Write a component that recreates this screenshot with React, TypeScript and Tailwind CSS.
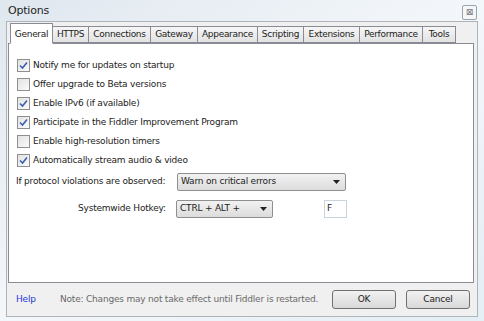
import React from 'react';

const tabs = [
  { t: 'General', w: 'w-[43px]' },
  { t: 'HTTPS', w: 'w-[36px]' },
  { t: 'Connections', w: 'w-[62px]' },
  { t: 'Gateway', w: 'w-[47px]' },
  { t: 'Appearance', w: 'w-[60px]' },
  { t: 'Scripting', w: 'w-[46px]' },
  { t: 'Extensions', w: 'w-[56px]' },
  { t: 'Performance', w: 'w-[63px]' },
  { t: 'Tools', w: 'w-[33px]' },
];

const options = [
  { label: 'Notify me for updates on startup', checked: true },
  { label: 'Offer upgrade to Beta versions', checked: false },
  { label: 'Enable IPv6 (if available)', checked: true },
  { label: 'Participate in the Fiddler Improvement Program', checked: true },
  { label: 'Enable high-resolution timers', checked: false },
  { label: 'Automatically stream audio & video', checked: true },
];

const CheckBox = ({ checked }: { checked: boolean }) => (
  <div className="w-[13px] h-[13px] border border-[#8f8f8f] bg-gradient-to-br from-[#e2e2e2] to-[#fbfbfb] flex items-center justify-center shrink-0">
    {checked && (
      <svg width="9" height="9" viewBox="0 0 9 9">
        <path d="M1 4.5 L3.5 7 L8 1.5" stroke="#3a5fae" strokeWidth="1.6" fill="none" />
      </svg>
    )}
  </div>
);

const Arrow = () => (
  <svg width="7" height="4" viewBox="0 0 7 4">
    <path d="M0 0 H7 L3.5 4 Z" fill="#222" />
  </svg>
);

const Combo = ({ text, className }: { text: string; className: string }) => (
  <div className={`h-[18px] border border-[#8e8f8f] rounded-[2px] bg-gradient-to-b from-[#f2f2f2] to-[#dcdcdc] flex items-center justify-between pl-[3px] pr-[5px] ${className}`}>
    <span>{text}</span>
    <Arrow />
  </div>
);

export default function App() {
  return (
    <div
      className="w-[484px] h-[321px] bg-gradient-to-br from-[#dfe7ef] via-[#f4f7fa] to-[#e3eef5] flex flex-col text-[9px] tracking-[-0.2px] text-[#222]"
      style={{ fontFamily: '"DejaVu Sans", Verdana, sans-serif' }}
    >
      {/* Title bar */}
      <div className="h-[21px] flex items-center justify-between pl-[8px] pr-[7px] shrink-0">
        <span className="text-[11px] tracking-[-0.2px] text-[#1e1e1e] pt-[2px]">Options</span>
        <div className="w-[15px] h-[15px] mt-[3px] border border-[#9aa4ad] rounded-[2px] bg-[#f4f6f8] flex items-center justify-center text-[9px] text-[#777] leading-none">
          ⊠
        </div>
      </div>

      {/* Client area */}
      <div className="mx-[6px] w-[472px] h-[296px] bg-[#f0f0f0] border border-[#aeb4ba] flex flex-col pt-[2px]">
        {/* Tabs */}
        <div className="flex items-end pl-[3px] h-[19px] relative z-10 tracking-[-0.3px]">
          {tabs.map(({ t, w }, i) =>
            i === 0 ? (
              <div key={t} className={`${w} h-[21px] -mb-px bg-white border border-[#898c95] border-b-white flex justify-center pt-[4px]`}>
                {t}
              </div>
            ) : (
              <div key={t} className={`${w} h-[17px] border border-[#898c95] border-l-0 bg-gradient-to-b from-[#f6f6f6] to-[#e2e2e2] flex items-center justify-center`}>
                {t}
              </div>
            )
          )}
        </div>

        {/* Panel */}
        <div className="w-[466px] h-[240px] bg-white border border-[#898c95] ml-[1px] flex flex-col pl-[8px] pt-[15px]">
          <div className="flex flex-col gap-[6px]">
            {options.map((o) => (
              <div key={o.label} className="flex items-center gap-[3px] h-[13px]">
                <CheckBox checked={o.checked} />
                <span>{o.label}</span>
              </div>
            ))}
          </div>

          <div className="flex items-center mt-[6px] -ml-[1px]">
            <span className="w-[161px]">If protocol violations are observed:</span>
            <Combo text="Warn on critical errors" className="w-[169px]" />
          </div>

          <div className="flex items-center mt-[9px] ml-[61px]">
            <span className="w-[98px]">Systemwide Hotkey:</span>
            <Combo text="CTRL + ALT +" className="w-[97px]" />
            <div className="ml-[51px] w-[23px] h-[18px] border border-[#c9d3dc] bg-white pl-[2px] flex items-center">F</div>
          </div>
        </div>

        {/* Bottom bar */}
        <div className="flex items-center h-[33px] pl-[9px] pr-[7px]">
          <span className="text-[#2a37d6] w-[44px]">Help</span>
          <span className="text-[#6a6a6a]">Note: Changes may not take effect until Fiddler is restarted.</span>
          <div className="ml-auto flex gap-[10px]">
            <div className="w-[64px] h-[19px] border border-[#707070] rounded-[3px] bg-gradient-to-b from-[#f2f2f2] to-[#d8d8d8] flex items-center justify-center">OK</div>
            <div className="w-[64px] h-[19px] border border-[#707070] rounded-[3px] bg-gradient-to-b from-[#f2f2f2] to-[#d8d8d8] flex items-center justify-center">Cancel</div>
          </div>
        </div>
      </div>
    </div>
  );
}
